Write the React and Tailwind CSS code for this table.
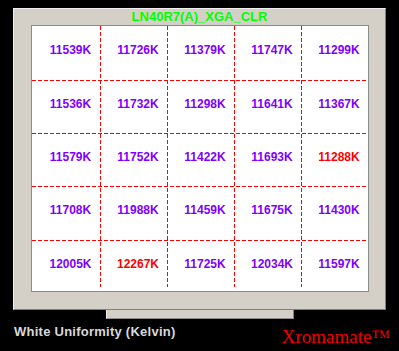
import React from 'react';

// 색온도 측정값 (5x5)
const ROWS = [
  ['11539K', '11726K', '11379K', '11747K', '11299K'],
  ['11536K', '11732K', '11298K', '11641K', '11367K'],
  ['11579K', '11752K', '11422K', '11693K', '11288K'],
  ['11708K', '11988K', '11459K', '11675K', '11430K'],
  ['12005K', '12267K', '11725K', '12034K', '11597K'],
];

// 빨간색으로 표시되는 값 (최소/최대)
const HIGHLIGHT = ['11288K', '12267K'];

function GridLines() {
  const xs = [68, 135, 202, 269];
  const ys = [54, 107, 160, 214];
  return (
    <svg className="absolute inset-0 pointer-events-none" width="336" height="265">
      {xs.map((x) => (
        <line key={'v' + x} x1={x + 0.5} y1="0" x2={x + 0.5} y2="261" stroke="#ff0000" strokeWidth="1" strokeDasharray="4 2" />
      ))}
      {ys.map((y) => (
        <line key={'h' + y} x1="0" y1={y + 0.5} x2="334" y2={y + 0.5} stroke="#ff0000" strokeWidth="1" strokeDasharray="4 2" />
      ))}
    </svg>
  );
}

export default function App() {
  return (
    <div className="w-[399px] h-[351px] bg-black overflow-hidden font-['Liberation_Sans',Arial,sans-serif]">
      <div className="pt-[8px] pl-[13px]">
        {/* 패널 */}
        <div className="w-[373px] h-[302px] bg-[#d4d0c8] border border-t-[#f0f0f0] border-l-[#f0f0f0] border-r-[#808080] border-b-[#808080]">
          <div className="h-[16px] leading-[16px] text-center text-[13px] font-bold text-[#00ff00]">
            LN40R7(A)_XGA_CLR
          </div>
          <div className="ml-[17px] w-[338px] h-[267px] bg-white border border-[#8a8a8a]">
            <div className="relative w-[336px] h-[265px]">
              <div className="grid grid-cols-[68px_67px_67px_67px_67px] grid-rows-[54px_53px_53px_54px_51px]">
                {ROWS.flat().map((v, i) => (
                  <div
                    key={i}
                    className={`text-center pl-[9px] pt-[17px] text-[12px] leading-[14px] font-bold ${
                      HIGHLIGHT.includes(v) ? 'text-[#ff0000]' : 'text-[#8000ff]'
                    }`}
                  >
                    {v}
                  </div>
                ))}
              </div>
              <GridLines />
            </div>
          </div>
        </div>
        {/* 하단 탭 */}
        <div className="ml-[93px] w-[188px] h-[9px] bg-[#d4d0c8] border-l border-l-[#f0f0f0] border-r border-r-[#808080] border-b border-b-[#909090]" />
      </div>

      <div className="flex">
        <div className="pl-[14px] mt-[5px] text-[13px] leading-[15px] font-bold tracking-[0.25px] text-[#d8d8d8]">
          White Uniformity (Kelvin)
        </div>
        <div className="ml-auto pr-[9px] mt-[7px] text-[19px] leading-[22px] text-[#f00000] font-['Liberation_Serif','Times_New_Roman',serif]">
          Xromamate™
        </div>
      </div>
    </div>
  );
}
